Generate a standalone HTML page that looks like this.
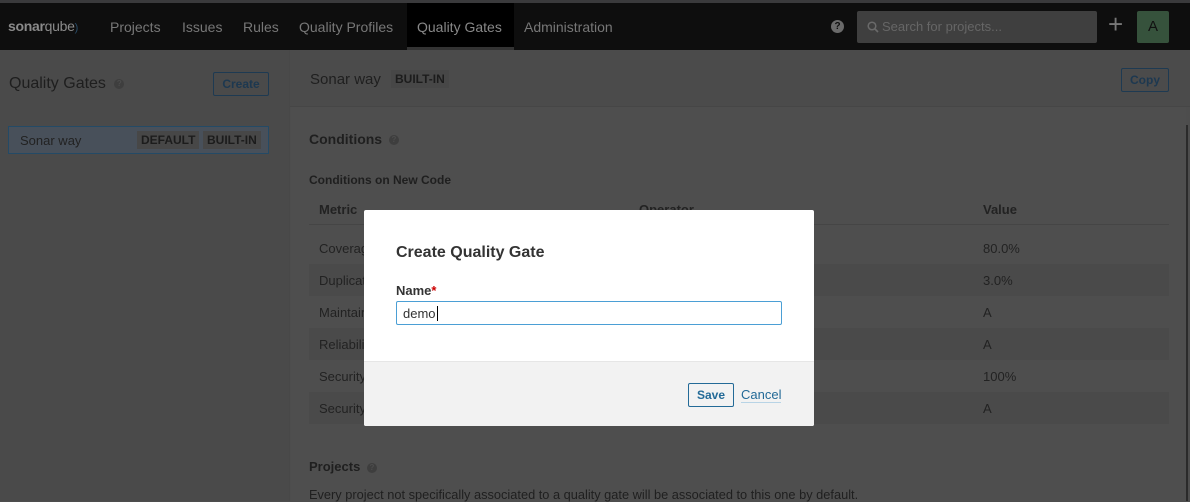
<!DOCTYPE html>
<html><head><style>
*{box-sizing:border-box;margin:0;padding:0}
body{width:1190px;height:501px;overflow:hidden;background:#4d4d4d;font-family:"Liberation Sans",sans-serif;color:#1f1f1f;position:relative;font-size:13px}
.top{position:absolute;left:0;top:0;width:1190px;height:3px;background:#3a3a3c}
.nav{position:absolute;left:0;top:3px;width:1190px;height:47px;background:#0e0e0e}
.nav span{position:absolute;top:16px;font-size:14px;color:#777}
.left{position:absolute;left:0;top:50px;width:290px;height:451px;background:#4a4a4a;border-right:1px solid #484848}
.hdr{position:absolute;left:290px;top:50px;width:900px;height:57px;background:#4b4b4b;border-bottom:1px solid #464646}
.main{position:absolute;left:291px;top:107px;width:895px;height:394px;background:#4e4e4e}
.badge{display:inline-block;background:#474747;font-weight:bold;font-size:12px;padding:2px 4px;color:#1c1c1c}
.q{display:inline-block;width:10px;height:10px;border-radius:50%;background:#3e3e3e;vertical-align:middle;color:#4d4d4d;font-size:8px;font-weight:bold;text-align:center;line-height:10px}
.row{position:absolute;left:309px;width:860px;height:32px;font-size:13px;color:#222}
.row span{position:absolute;top:9px}
.modal{position:absolute;left:364px;top:210px;width:450px;height:216px;background:#fff;border-radius:2px;overflow:hidden}
.foot{position:absolute;left:0;top:151px;width:450px;height:65px;background:#f2f2f2;border-top:1px solid #e6e6e6}
</style></head><body>
<div class="top"></div>
<div class="nav">
<span style="left:8px;top:15px;font-size:14px;color:#8a8a8a;letter-spacing:-0.3px"><b>sonar</b>qube<span style="position:static;color:#2a4d6a;font-size:11px">)</span></span>
<span style="left:110px">Projects</span>
<span style="left:182px">Issues</span>
<span style="left:243px">Rules</span>
<span style="left:299px">Quality Profiles</span>
<div style="position:absolute;left:407px;top:0;width:107px;height:47px;background:#000;border-bottom:3px solid #333"></div>
<span style="left:417px;color:#888">Quality Gates</span>
<span style="left:524px">Administration</span>
<div style="position:absolute;left:831px;top:17px;width:13px;height:13px;border-radius:50%;background:#6a6a6a;color:#0e0e0e;font-size:10px;font-weight:bold;text-align:center;line-height:13px">?</div>
<div style="position:absolute;left:857px;top:8px;width:240px;height:32px;background:#3f3f3f;border-radius:2px">
<svg style="position:absolute;left:10px;top:10px" width="12" height="12" viewBox="0 0 12 12"><circle cx="5" cy="5" r="3.8" stroke="#6a6a6a" stroke-width="1.5" fill="none"/><path d="M8 8l3 3" stroke="#6a6a6a" stroke-width="1.6"/></svg>
<span style="left:25px;top:8px;font-size:13px;color:#666">Search for projects...</span></div>
<span style="left:1108px;top:6px;font-size:26px;color:#777">+</span>
<div style="position:absolute;left:1137px;top:8px;width:32px;height:32px;background:#36523c;border-radius:2px;color:#111;text-align:center;line-height:32px;font-size:15px">A</div>
</div>
<div class="left">
<div style="position:absolute;left:9px;top:25px;font-size:16px;color:#1e1e1e">Quality Gates <span class="q" style="margin-left:4px">?</span></div>
<div style="position:absolute;left:213px;top:22px;width:56px;height:24px;border:1px solid #1e3a52;color:#1d3850;font-weight:bold;font-size:12px;text-align:center;line-height:22px;border-radius:2px">Create</div>
<div style="position:absolute;left:8px;top:76px;width:261px;height:28px;background:#48505a;border:1px solid #244a66">
<span style="position:absolute;left:11px;top:6px;color:#222">Sonar way</span>
<span class="badge" style="position:absolute;left:128px;top:4px">DEFAULT</span>
<span class="badge" style="position:absolute;left:194px;top:4px">BUILT-IN</span></div>
</div>
<div class="hdr">
<span style="position:absolute;left:20px;top:21px;font-size:15px">Sonar way</span>
<span class="badge" style="position:absolute;left:101px;top:20px">BUILT-IN</span>
<div style="position:absolute;left:831px;top:18px;width:48px;height:24px;border:1px solid #1e3a52;color:#1d3850;font-weight:bold;font-size:12px;text-align:center;line-height:22px;border-radius:2px">Copy</div>
</div>
<div class="main"></div>
<div style="position:absolute;left:309px;top:131px;font-weight:bold;font-size:14px">Conditions <span class="q" style="margin-left:3px">?</span></div>
<div style="position:absolute;left:309px;top:173px;font-weight:bold;font-size:12px">Conditions on New Code</div>
<div class="row" style="top:193px;border-bottom:1px solid #454545"><span style="left:10px;top:9px;font-weight:bold">Metric</span><span style="left:330px;font-weight:bold">Operator</span><span style="left:674px;font-weight:bold">Value</span></div>
<div class="row" style="top:232px"><span style="left:10px">Coverage</span><span style="left:674px">80.0%</span></div>
<div class="row" style="top:264px;background:#4a4a4a"><span style="left:10px">Duplicated</span><span style="left:674px">3.0%</span></div>
<div class="row" style="top:296px"><span style="left:10px">Maintainability</span><span style="left:674px">A</span></div>
<div class="row" style="top:328px;background:#4a4a4a"><span style="left:10px">Reliability</span><span style="left:674px">A</span></div>
<div class="row" style="top:360px"><span style="left:10px">Security</span><span style="left:674px">100%</span></div>
<div class="row" style="top:392px;background:#4a4a4a"><span style="left:10px">Security</span><span style="left:674px">A</span></div>
<div style="position:absolute;left:309px;top:459px;font-weight:bold;font-size:13px">Projects <span class="q" style="margin-left:3px">?</span></div>
<div style="position:absolute;left:309px;top:487px;font-size:12.8px">Every project not specifically associated to a quality gate will be associated to this one by default.</div>
<div style="position:absolute;left:1186px;top:125px;width:2px;height:376px;background:#2a2a2a"></div>
<div class="modal">
<div style="position:absolute;left:32px;top:34px;font-size:16px;font-weight:bold;color:#333">Create Quality Gate</div>
<div style="position:absolute;left:32px;top:73px;font-size:13px;font-weight:bold;color:#333">Name<span style="color:#c00">*</span></div>
<div style="position:absolute;left:32px;top:91px;width:386px;height:24px;border:1px solid #4b9fd5;border-radius:2px;font-size:13px;color:#333;padding:4px 6px">demo<span style="border-left:1px solid #000;margin-left:1px"></span></div>
<div class="foot">
<div style="position:absolute;left:324px;top:21px;width:46px;height:24px;border:1px solid #236a97;color:#236a97;font-weight:bold;font-size:12px;text-align:center;line-height:22px;border-radius:2px">Save</div>
<div style="position:absolute;left:377px;top:25px;font-size:13px;color:#236a97;border-bottom:1px solid #b8d4e6">Cancel</div>
</div></div>
</body></html>
